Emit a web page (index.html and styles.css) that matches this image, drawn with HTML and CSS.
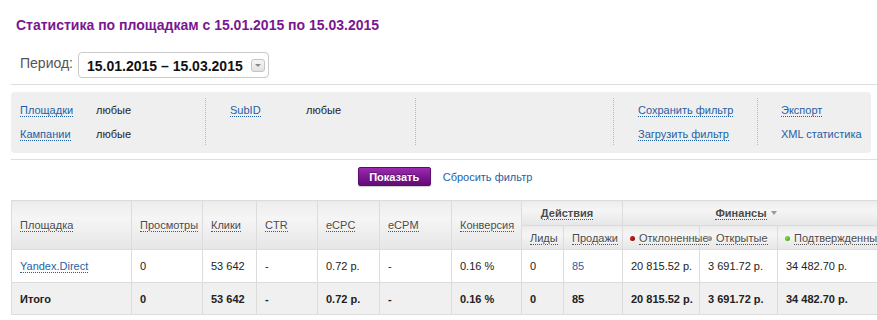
FILE: index.html
```html
<!DOCTYPE html>
<html lang="ru">
<head>
<meta charset="utf-8">
<title>Статистика по площадкам</title>
<link rel="stylesheet" href="styles.css">
</head>
<body>
<div class="page">
  <h1 class="title">Статистика по площадкам с 15.01.2015 по 15.03.2015</h1>
  <div class="period">
    <span class="period-label">Период:</span>
    <div class="date-box">
      <span class="date-text">15.01.2015 – 15.03.2015</span>
      <span class="date-btn"><span class="date-tri"></span></span>
    </div>
  </div>
  <div class="rule"></div>
  <div class="filter">
    <div class="fcol fcol-1">
      <div class="frow"><span class="flabel"><a class="dlink">Площадки</a></span><span class="fval">любые</span></div>
      <div class="frow"><span class="flabel"><a class="dlink">Кампании</a></span><span class="fval">любые</span></div>
    </div>
    <div class="fcol fcol-2">
      <div class="frow"><span class="flabel"><a class="dlink">SubID</a></span><span class="fval">любые</span></div>
    </div>
    <div class="fcol fcol-3"></div>
    <div class="fcol fcol-4">
      <div class="frow"><a class="dlink">Сохранить фильтр</a></div>
      <div class="frow"><a class="dlink">Загрузить фильтр</a></div>
    </div>
    <div class="fcol fcol-5">
      <div class="frow"><a class="dlink">Экспорт</a></div>
      <div class="frow"><a class="plink">XML статистика</a></div>
    </div>
  </div>
  <div class="rule"></div>
  <div class="actions">
    <button class="btn-show">Показать</button>
    <a class="plink">Сбросить фильтр</a>
  </div>
  <table class="stats">
    <colgroup>
      <col class="w120"><col class="w71"><col class="w54"><col class="w61"><col class="w62"><col class="w72"><col class="w70"><col class="w42"><col class="w59"><col class="w77"><col class="w78"><col class="w102">
    </colgroup>
    <thead>
      <tr class="hr1">
        <th rowspan="2"><span class="hlink">Площадка</span></th>
        <th rowspan="2"><span class="hlink">Просмотры</span></th>
        <th rowspan="2"><span class="hlink">Клики</span></th>
        <th rowspan="2"><span class="hlink">CTR</span></th>
        <th rowspan="2"><span class="hlink">eCPC</span></th>
        <th rowspan="2"><span class="hlink">eCPM</span></th>
        <th rowspan="2"><span class="hlink">Конверсия</span></th>
        <th colspan="2" class="group"><span class="hlink">Действия</span></th>
        <th colspan="3" class="group"><span class="hlink">Финансы</span><span class="fin-tri"></span></th>
      </tr>
      <tr class="hr2">
        <th><span class="hlink">Лиды</span></th>
        <th><span class="hlink">Продажи</span></th>
        <th class="dotcell"><span class="dot dot-red"></span><span class="hlink">Отклоненные</span></th>
        <th class="dotcell"><span class="dot dot-gray"></span><span class="hlink">Открытые</span></th>
        <th class="dotcell"><span class="dot dot-green"></span><span class="hlink">Подтвержденные</span></th>
      </tr>
    </thead>
    <tbody>
      <tr class="row">
        <td><a class="dlink">Yandex.Direct</a></td>
        <td>0</td>
        <td>53 642</td>
        <td>-</td>
        <td>0.72 р.</td>
        <td>-</td>
        <td>0.16 %</td>
        <td>0</td>
        <td><a class="plink">85</a></td>
        <td>20 815.52 р.</td>
        <td>3 691.72 р.</td>
        <td>34 482.70 р.</td>
      </tr>
      <tr class="total">
        <td>Итого</td>
        <td>0</td>
        <td>53 642</td>
        <td>-</td>
        <td>0.72 р.</td>
        <td>-</td>
        <td>0.16 %</td>
        <td>0</td>
        <td>85</td>
        <td>20 815.52 р.</td>
        <td>3 691.72 р.</td>
        <td>34 482.70 р.</td>
      </tr>
    </tbody>
  </table>
</div>
</body>
</html>
```
FILE: styles.css
```css
html, body {
  margin: 0;
  padding: 0;
  overflow: hidden;
  background: #fff;
}
body {
  font-family: "Liberation Sans", Arial, Helvetica, sans-serif;
  font-size: 11px;
  color: #222;
}
.page {
  width: 866px;
  padding-left: 11px;
}
.title {
  margin: 17px 0 0 0;
  padding-left: 5px;
  font-size: 14px;
  line-height: 16px;
  font-weight: bold;
  color: #7a1790;
}
.period {
  display: flex;
  align-items: flex-start;
  margin-top: 19px;
  padding-left: 9px;
}
.period-label {
  font-size: 14px;
  line-height: 16px;
  color: #555;
  margin-top: 3px;
  margin-right: 5px;
}
.date-box {
  box-sizing: border-box;
  height: 26px;
  display: flex;
  align-items: center;
  border: 1px solid #cacaca;
  border-radius: 4px;
  padding: 0 3px 0 8px;
  background: #fff;
}
.date-text {
  font-size: 14px;
  font-weight: bold;
  color: #111;
  line-height: 16px;
  margin-top: 1px;
}
.date-btn {
  box-sizing: border-box;
  width: 14px;
  height: 13px;
  margin-left: 8px;
  border: 1px solid #c4c4c4;
  border-radius: 3px;
  background: linear-gradient(#f6f6f6, #e2e2e2);
  display: flex;
  align-items: center;
  justify-content: center;
}
.date-tri {
  width: 0;
  height: 0;
  border-left: 3px solid transparent;
  border-right: 3px solid transparent;
  border-top: 3px solid #8a8a8a;
}
.rule {
  height: 1px;
  background: #dedede;
  margin-top: 6px;
}
.filter {
  margin-top: 7px;
  width: 860px;
  box-sizing: border-box;
  background: #efefef;
  border-radius: 4px;
  padding: 6px 0 8px;
  display: flex;
}
.fcol {
  box-sizing: border-box;
  padding: 5px 0 4px 24px;
  height: 47px;
  border-left: 1px dotted #b8b8b8;
}
.fcol-1 { width: 194px; padding-left: 9px; border-left: none; }
.fcol-2 { width: 210px; }
.fcol-3 { width: 198px; }
.fcol-4 { width: 144px; }
.fcol-5 { width: 114px; padding-left: 23px; }
.frow {
  display: flex;
  height: 14px;
  line-height: 14px;
  white-space: nowrap;
}
.frow + .frow { margin-top: 10px; }
.flabel { width: 76px; flex: none; }
.fval { color: #222; }
.dlink {
  color: #1f5fa6;
  border-bottom: 1px dotted #1f5fa6;
  text-decoration: none;
  cursor: pointer;
}
.plink {
  color: #1f5fa6;
  text-decoration: none;
  cursor: pointer;
}
.rule + .actions { margin-top: 7px; }
.actions {
  display: flex;
  justify-content: center;
  align-items: center;
  gap: 12px;
  height: 19px;
  padding-left: 2px;
}
.btn-show {
  box-sizing: border-box;
  width: 73px;
  height: 19px;
  padding: 0;
  border: 1px solid #5d0b6d;
  border-radius: 2px;
  background: linear-gradient(#9c2bb0, #7a1690 55%, #640a76);
  color: #fff;
  font-family: inherit;
  font-size: 11px;
  font-weight: bold;
  box-shadow: 0 1px 1px rgba(0,0,0,0.2);
  text-shadow: 0 -1px 0 rgba(0,0,0,0.3);
}
.stats {
  margin-top: 14px;
  width: 868px;
  table-layout: fixed;
  border-collapse: collapse;
  border: 1px solid #dcdcdc;
}
.w120 { width: 120px; }
.w71 { width: 71px; }
.w54 { width: 54px; }
.w61 { width: 61px; }
.w62 { width: 62px; }
.w72 { width: 72px; }
.w70 { width: 70px; }
.w42 { width: 42px; }
.w59 { width: 59px; }
.w77 { width: 77px; }
.w78 { width: 78px; }
.w102 { width: 102px; }
.stats th, .stats td {
  border: 1px solid #dcdcdc;
  padding: 0 0 0 8px;
  white-space: nowrap;
  text-align: left;
  vertical-align: middle;
  font-size: 11px;
}
.stats th {
  font-weight: normal;
  background: linear-gradient(#ededed, #f5f5f5 35%, #e6e6e6);
  color: #444;
}
.stats th.group {
  text-align: center;
  font-weight: bold;
  padding: 0 10px 0 0;
}
.hr1 { height: 25px; }
.hr2 { height: 24px; }
.row { height: 33px; }
.total { height: 32px; }
.hlink {
  color: #4a4a4a;
  border-bottom: 1px dotted #555;
  text-shadow: 0 1px 0 #fff;
}
.fin-tri {
  display: inline-block;
  width: 0;
  height: 0;
  margin-left: 4px;
  vertical-align: 2px;
  border-left: 3px solid transparent;
  border-right: 3px solid transparent;
  border-top: 4px solid #999;
}
.dotcell { padding-left: 7px !important; }
.dot {
  display: inline-block;
  width: 5px;
  height: 5px;
  border-radius: 50%;
  margin-right: 4px;
  vertical-align: 1px;
}
.dot-red { background: radial-gradient(circle at 35% 35%, #d02020, #880000); }
.dot-gray { background: radial-gradient(circle at 35% 35%, #bbb, #777); }
.dot-green { background: radial-gradient(circle at 35% 35%, #7de03a, #3a9a10); }
.row td { background: #fff; color: #222; }
.total td { background: #f0f0f0; font-weight: bold; color: #222; }
```
